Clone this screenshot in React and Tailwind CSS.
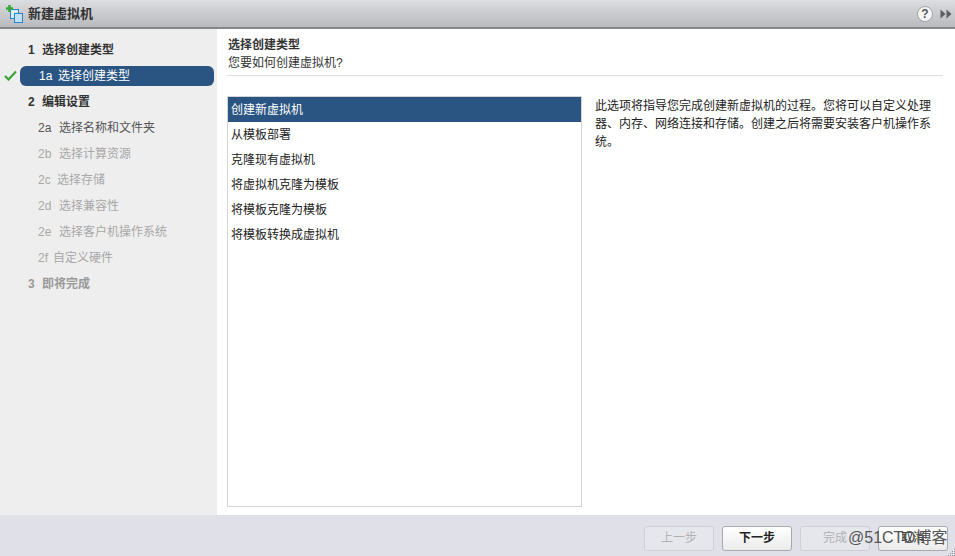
import React from "react";

const steps = [
  { num: "1", label: "选择创建类型", kind: "head" },
  { num: "1a", label: "选择创建类型", kind: "active" },
  { num: "2", label: "编辑设置", kind: "head" },
  { num: "2a", label: "选择名称和文件夹", kind: "sub", numClass: "w-[21px]" },
  { num: "2b", label: "选择计算资源", kind: "off", numClass: "w-[21px]" },
  { num: "2c", label: "选择存储", kind: "off", numClass: "w-[19px]" },
  { num: "2d", label: "选择兼容性", kind: "off", numClass: "w-[21px]" },
  { num: "2e", label: "选择客户机操作系统", kind: "off", numClass: "w-[21px]" },
  { num: "2f", label: "自定义硬件", kind: "off", numClass: "w-[15px]" },
  { num: "3", label: "即将完成", kind: "headOff" },
];

const types = ["创建新虚拟机", "从模板部署", "克隆现有虚拟机", "将虚拟机克隆为模板", "将模板克隆为模板", "将模板转换成虚拟机"];

function StepRow({ step }) {
  if (step.kind === "active") {
    return (
      <div className="h-[26px] flex items-center relative">
        <svg className="absolute left-[4px] top-[7px]" width="13" height="11" viewBox="0 0 13 11">
          <path d="M1 6 L4.5 9.5 L12 1.5" fill="none" stroke="#3aa535" strokeWidth="2.2" />
        </svg>
        <div className="ml-[20px] w-[194px] h-[20px] rounded-[6px] bg-[#2a5582] text-white flex items-center pl-[19px]">
          <span className="w-[19px]">{step.num}</span>
          <span>{step.label}</span>
        </div>
      </div>
    );
  }
  if (step.kind === "head" || step.kind === "headOff") {
    return (
      <div className={`h-[26px] flex items-center pl-[28px] font-bold ${step.kind === "head" ? "text-[#333333]" : "text-[#999999]"}`}>
        <span className="w-[14px]">{step.num}</span>
        <span>{step.label}</span>
      </div>
    );
  }
  return (
    <div className={`h-[26px] flex items-center pl-[38px] ${step.kind === "sub" ? "text-[#555555]" : "text-[#a8a8a8]"}`}>
      <span className={step.numClass}>{step.num}</span>
      <span>{step.label}</span>
    </div>
  );
}

function FootButton({ children, disabled, strong }) {
  return (
    <button
      className={`w-[70px] h-[25px] rounded-[3px] border flex items-center justify-center ${
        disabled
          ? "border-[#cfd0d6] bg-[#e6e7ed] text-[#b0b0b4]"
          : "border-[#a9aaaf] bg-gradient-to-b from-white to-[#ebebeb] text-[#222222]"
      } ${strong ? "font-bold" : ""}`}
    >
      {children}
    </button>
  );
}

export default function App() {
  return (
    <div
      className="w-[955px] h-[556px] flex flex-col relative overflow-hidden bg-white text-[12px] text-[#333333]"
      style={{ fontFamily: '"Liberation Sans", "Noto Sans CJK SC", sans-serif' }}
    >
      {/* title bar */}
      <div className="h-[29px] shrink-0 flex items-center bg-gradient-to-b from-[#dcdde1] to-[#b9babe] border-b-2 border-[#85868a]">
        <svg className="ml-[6px]" width="17" height="18" viewBox="0 0 17 18">
          <rect x="4.5" y="4.5" width="8" height="9" fill="#d6ebfa" stroke="#2b86cc" />
          <rect x="8.5" y="8.5" width="8" height="9" fill="#bfe0f7" stroke="#2b86cc" />
          <path d="M3.5 0 V7 M0 3.5 H7" stroke="#35a83a" strokeWidth="2.6" />
        </svg>
        <span className="ml-[5px] text-[13px] font-bold text-[#333333]">新建虚拟机</span>
        <div className="ml-auto flex items-center">
          <div className="w-[16px] h-[16px] rounded-full bg-[#f5f5f5] border border-[#a5a5a5] flex items-center justify-center text-[12px] font-bold text-[#555555]">?</div>
          <svg className="ml-[7px] mr-[3px]" width="12" height="10" viewBox="0 0 12 10">
            <path d="M0.5 0.5 L5.5 5 L0.5 9.5 Z M6.5 0.5 L11.5 5 L6.5 9.5 Z" fill="#5c5f62" />
          </svg>
        </div>
      </div>

      <div className="flex-1 flex min-h-0">
        {/* wizard steps */}
        <div className="w-[217px] shrink-0 bg-[#eeeeee] pt-[8px]">
          {steps.map((s, i) => (
            <StepRow key={i} step={s} />
          ))}
        </div>

        {/* main */}
        <div className="flex-1 pl-[10px] pr-[12px] flex flex-col pb-[8px]">
          <div className="pt-[7px] h-[47px] border-b border-[#dcdcdc] leading-[18px]">
            <div className="pl-[1px] font-bold text-[#333333]">选择创建类型</div>
            <div className="pl-[1px] text-[#333333]">您要如何创建虚拟机?</div>
          </div>
          <div className="flex-1 flex mt-[20px] min-h-0">
            <div className="w-[355px] border border-[#d4d4d4] bg-white">
              {types.map((t, i) => (
                <div
                  key={t}
                  className={`h-[25px] flex items-center pl-[3px] ${i === 0 ? "bg-[#2a5582] text-white" : "text-[#222222]"}`}
                >
                  {t}
                </div>
              ))}
            </div>
            <p className="ml-[13px] w-[344px] mt-[1px] leading-[18px] text-[#222222]">
              此选项将指导您完成创建新虚拟机的过程。您将可以自定义处理器、内存、网络连接和存储。创建之后将需要安装客户机操作系统。
            </p>
          </div>
        </div>
      </div>

      {/* footer */}
      <div className="h-[41px] shrink-0 bg-[#dfe0e8] flex items-center justify-end gap-[8px] pr-[7px] pt-[5px]">
        <FootButton disabled>上一步</FootButton>
        <FootButton strong>下一步</FootButton>
        <FootButton disabled>完成</FootButton>
        <FootButton>取消</FootButton>
      </div>

      {/* watermark */}
      <div className="absolute left-[848px] top-[528px] text-[16px] leading-[20px] text-[#555555]">@51CTO博客</div>

      {/* resize grip */}
      <svg className="absolute right-0 bottom-0" width="8" height="8" viewBox="0 0 8 8">
        <path d="M7 1h1v1H7z M5 3h1v1H5z M7 3h1v1H7z M3 5h1v1H3z M5 5h1v1H5z M7 5h1v1H7z M1 7h1v1H1z M3 7h1v1H3z M5 7h1v1H5z M7 7h1v1H7z" fill="#8f9096" />
      </svg>
    </div>
  );
}
